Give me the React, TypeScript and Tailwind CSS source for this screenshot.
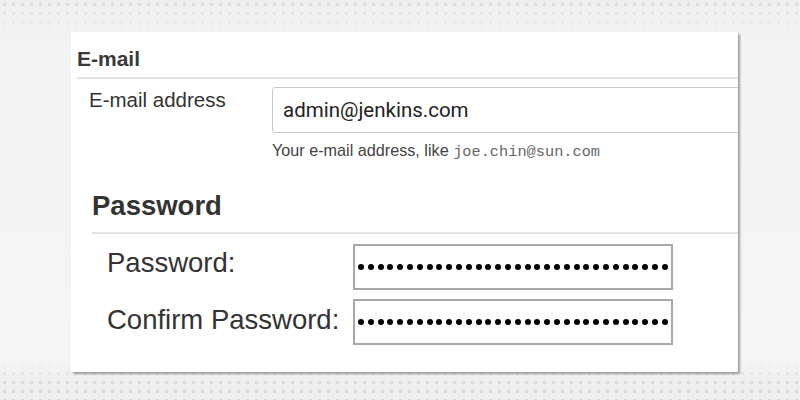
import React from 'react'

const DOTS = Array.from({ length: 32 })

function PasswordBox() {
  return (
    <div className="flex h-[46px] w-[320px] items-center border-2 border-[#a8a8a8] bg-white pl-[3px]">
      <div className="flex gap-[3.8px]">
        {DOTS.map((_, i) => (
          <span key={i} className="h-[6px] w-[6px] rounded-full bg-black" />
        ))}
      </div>
    </div>
  )
}

export default function App() {
  return (
    <div className="h-[400px] w-[800px] overflow-hidden bg-[#efefef] bg-[linear-gradient(to_bottom,transparent_0px,#f3f3f3_40px,#f5f5f5_360px,transparent_382px),radial-gradient(circle,#dadada_1.4px,transparent_2.2px)] bg-[length:100%_100%,9px_9px] pt-[32px] pl-[71px] font-['Liberation_Sans',Arial,sans-serif] text-[#333]">
      <div className="h-[340px] w-[667px] overflow-hidden bg-white shadow-[2px_2px_2px_rgba(0,0,0,0.35)]">
        {/* E-mail section */}
        <div className="pl-[6px] pt-[13px]">
          <h2 className="text-[21px] font-bold leading-[28px] text-[#3a3a3a]">E-mail</h2>
          <div className="mt-[4px] h-[2px] bg-[#e2e2e2]" />
        </div>
        <div className="flex pl-[18px] pt-[8px]">
          <div className="w-[183px] pt-[2px] text-[20.5px] leading-[22px]">E-mail address</div>
          <div className="flex-1">
            <div className="-mr-[10px] flex h-[46px] items-center rounded-[3px] border border-[#c9c9c9] pl-[10px] font-['Roboto',Arial,sans-serif] text-[20.5px] text-[#222]">
              admin@jenkins.com
            </div>
            <div className="mt-[8px] text-[16.2px] leading-[18px] text-[#444]">
              Your e-mail address, like{' '}
              <span className="font-['Liberation_Mono',monospace] text-[15.3px] text-[#666]">joe.chin@sun.com</span>
            </div>
          </div>
        </div>

        {/* Password section */}
        <div className="pl-[21px] pt-[30px]">
          <h2 className="text-[27.5px] font-bold leading-[30px] text-[#333]">Password</h2>
          <div className="mt-[11px] h-[2px] bg-[#e2e2e2]" />
        </div>
        <div className="flex flex-col gap-[9px] pl-[36px] pt-[10px]">
          <div className="flex items-center">
            <label className="w-[246px] pb-[8px] text-[27.5px] leading-[30px]">Password:</label>
            <PasswordBox />
          </div>
          <div className="flex items-center">
            <label className="w-[246px] pb-[4px] text-[27.5px] leading-[30px]">Confirm Password:</label>
            <PasswordBox />
          </div>
        </div>
      </div>
    </div>
  )
}
